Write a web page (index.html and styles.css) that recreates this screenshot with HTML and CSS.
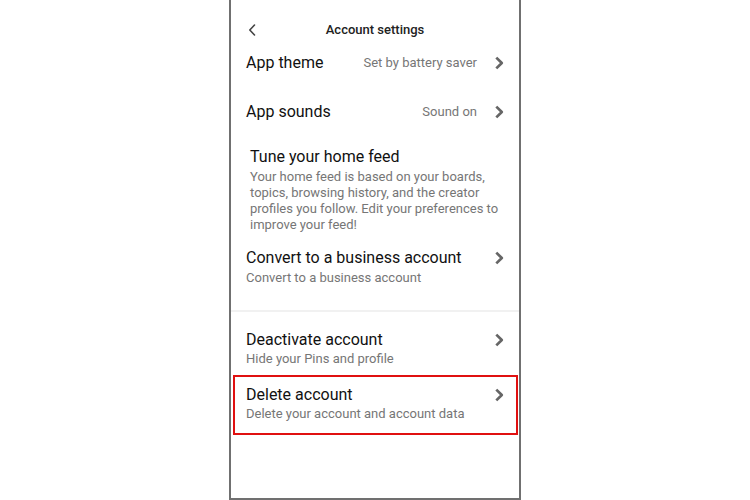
FILE: index.html
```html
<!DOCTYPE html>
<html lang="en">
<head>
  <meta charset="UTF-8" />
  <title>Account settings</title>
  <meta name="viewport" content="width=device-width, initial-scale=1.0" />
  <link rel="stylesheet" href="styles.css">
</head>
<body>

  <div class="telefono">
    <div class="barra">
      <span class="atras">
        <svg width="8" height="12" viewBox="0 0 8 12"><path d="M6.5 1 L1.8 6 L6.5 11" fill="none" stroke="#444" stroke-width="1.6" stroke-linecap="round" stroke-linejoin="round"/></svg>
      </span>
      <span class="titulo">Account settings</span>
      <span></span>
    </div>

    <div class="item item-tema">
      <div class="cabeza">
        <span class="nombre">App theme</span>
        <span class="valor">Set by battery saver</span>
        <svg class="flecha" width="10" height="14" viewBox="0 0 10 14"><path d="M2.3 1.6 L7.8 7 L2.3 12.4" fill="none" stroke="#666" stroke-width="2.7" stroke-linejoin="round"/></svg>
      </div>
    </div>

    <div class="item item-sonido">
      <div class="cabeza">
        <span class="nombre">App sounds</span>
        <span class="valor">Sound on</span>
        <svg class="flecha" width="10" height="14" viewBox="0 0 10 14"><path d="M2.3 1.6 L7.8 7 L2.3 12.4" fill="none" stroke="#666" stroke-width="2.7" stroke-linejoin="round"/></svg>
      </div>
    </div>

    <div class="item item-feed">
      <div class="cabeza">
        <span class="nombre">Tune your home feed</span>
      </div>
      <div class="texto">Your home feed is based on your boards, topics, browsing history, and the creator profiles you follow. Edit your preferences to improve your feed!</div>
    </div>

    <div class="item item-negocio">
      <div class="cabeza">
        <span class="nombre">Convert to a business account</span>
        <svg class="flecha" width="10" height="14" viewBox="0 0 10 14"><path d="M2.3 1.6 L7.8 7 L2.3 12.4" fill="none" stroke="#666" stroke-width="2.7" stroke-linejoin="round"/></svg>
      </div>
      <div class="texto">Convert to a business account</div>
    </div>

    <div class="separador"></div>

    <div class="item item-desactivar">
      <div class="cabeza">
        <span class="nombre">Deactivate account</span>
        <svg class="flecha" width="10" height="14" viewBox="0 0 10 14"><path d="M2.3 1.6 L7.8 7 L2.3 12.4" fill="none" stroke="#666" stroke-width="2.7" stroke-linejoin="round"/></svg>
      </div>
      <div class="texto">Hide your Pins and profile</div>
    </div>

    <div class="marcado">
      <div class="item item-borrar">
        <div class="cabeza">
          <span class="nombre">Delete account</span>
          <svg class="flecha" width="10" height="14" viewBox="0 0 10 14"><path d="M2.3 1.6 L7.8 7 L2.3 12.4" fill="none" stroke="#666" stroke-width="2.7" stroke-linejoin="round"/></svg>
        </div>
        <div class="texto">Delete your account and account data</div>
      </div>
    </div>
  </div>

</body>
</html>
```

FILE: styles.css
```css
body {
  margin: 0;
  padding: 0;
  background: #fff;
  font-family: Roboto, "Liberation Sans", Arial, sans-serif;
  color: #111;
}

.telefono {
  width: 292px;
  height: 500px;
  margin: 0 auto;
  box-sizing: border-box;
  border: 2px solid #707070;
  border-top: none;
  display: flex;
  flex-direction: column;
}

.barra {
  display: grid;
  grid-template-columns: 40px 1fr 40px;
  align-items: center;
  padding: 20px 0 13px;
  line-height: 20px;
}

.atras {
  display: flex;
  align-items: center;
  padding-left: 17px;
}

.titulo {
  text-align: center;
  font-size: 13px;
  font-weight: 500;
  color: #222;
}

.item {
  padding: 0 15px 0 15px;
}

.cabeza {
  display: flex;
  align-items: center;
  line-height: 20px;
}

.nombre {
  font-size: 16px;
  flex: 1;
}

.valor {
  font-size: 13px;
  color: #767676;
  margin-right: 17px;
}

.flecha {
  flex-shrink: 0;
}

.texto {
  font-size: 13px;
  line-height: 16px;
  color: #767676;
  margin-top: 2px;
}

.item-sonido {
  margin-top: 29px;
}

.item-feed {
  margin-top: 25px;
  padding-left: 19px;
}

.item-negocio {
  margin-top: 15px;
}

.separador {
  height: 2px;
  background: #f1f1f1;
  margin-top: 24px;
}

.item-desactivar {
  margin-top: 18px;
}

.item-desactivar .texto {
  margin-top: 1px;
}

.marcado {
  margin: 8px 1px 0 2px;
  border: 2px solid #e01010;
  padding: 8px 0 11px;
}

.item-borrar {
  padding: 0 12px 0 11px;
}

.item-borrar .texto {
  margin-top: 1px;
}
```
